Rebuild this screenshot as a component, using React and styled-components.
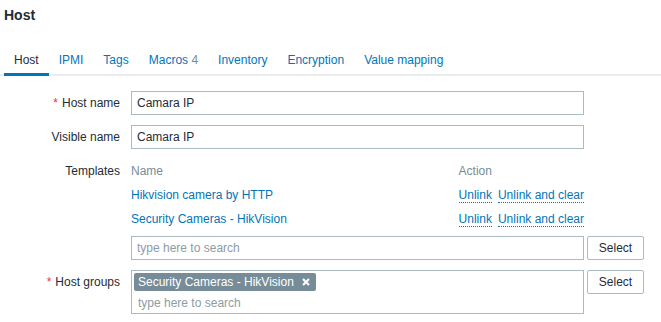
import React from 'react';
import styled, { createGlobalStyle } from 'styled-components';

const GlobalStyle = createGlobalStyle`
  body {
    margin: 0;
    background: #ffffff;
    color: #1f2c33;
    font-family: 'Liberation Sans', Arial, sans-serif;
    font-size: 12px;
  }
`;

const Page = styled.div`
  width: 661px;
`;

const Title = styled.h1`
  margin: 0;
  padding: 6px 4px 0;
  font-size: 14px;
  line-height: 18px;
  font-weight: bold;
  color: #1f2c33;
`;

const TabBar = styled.ul`
  display: flex;
  list-style: none;
  margin: 21px 0 0;
  padding: 0 0 0 4px;
  border-bottom: 2px solid #ebeef0;
`;

const Tab = styled.li`
  padding: 8px 10px 6px;
  line-height: 14px;
  margin-bottom: -2px;
  border-bottom: 3px solid ${p => (p.$active ? '#0275b8' : 'transparent')};
  color: ${p => (p.$active ? '#1f2c33' : '#0275b8')};
  white-space: nowrap;
`;

const Count = styled.span`
  color: #768d99;
`;

const Form = styled.div`
  display: grid;
  grid-template-columns: 120px 1fr;
  column-gap: 11px;
  row-gap: 10px;
  padding-top: 15px;
  align-items: start;
`;

const Label = styled.label`
  text-align: right;
  line-height: 24px;
  white-space: nowrap;
`;

const Required = styled.span`
  color: #e33734;
  margin-right: 4px;
`;

const Control = styled.div`
  display: flex;
  align-items: ${p => p.$align || 'flex-start'};
  gap: 3px;
`;

const TextBox = styled.div`
  box-sizing: border-box;
  width: 453px;
  height: 24px;
  border: 1px solid #acbbc2;
  padding: 0 5px;
  line-height: 22px;
  color: ${p => (p.$placeholder ? '#8d9ca5' : '#1f2c33')};
`;

const Field = styled.div`
  display: flex;
  flex-direction: column;
  gap: 5px;
  width: 453px;
`;

const TemplateTable = styled.div`
  display: grid;
  grid-template-columns: 1fr auto;
  line-height: 24px;
`;

const HeadCell = styled.div`
  color: #768d99;
`;

const Link = styled.span`
  color: #0275b8;
`;

const Actions = styled.div`
  display: flex;
  gap: 6px;
`;

const ActionLink = styled.span`
  color: #0275b8;
  line-height: 14px;
  border-bottom: 1px dotted #0275b8;
  align-self: center;
`;

const Button = styled.button`
  box-sizing: border-box;
  height: 24px;
  width: 57px;
  padding: 0;
  background: #ffffff;
  border: 1px solid #acbbc2;
  border-radius: 2px;
  color: #1f2c33;
  font-family: inherit;
  font-size: 12px;
`;

const MultiSelect = styled.div`
  box-sizing: border-box;
  width: 453px;
  height: 44px;
  border: 1px solid #acbbc2;
  padding: 2px 2px 0;
`;

const Chip = styled.span`
  display: inline-flex;
  align-items: center;
  gap: 8px;
  height: 18px;
  padding: 0 6px 0 4px;
  background: #768d99;
  color: #ffffff;
  border-radius: 2px;
`;

const Placeholder = styled.div`
  padding: 2px 0 0 4px;
  line-height: 20px;
  color: #8d9ca5;
`;

function CloseIcon() {
  return (
    <svg width="8" height="8" viewBox="0 0 8 8">
      <path d="M1 1 L7 7 M7 1 L1 7" stroke="#ffffff" strokeWidth="2.2" />
    </svg>
  );
}

const templates = ['Hikvision camera by HTTP', 'Security Cameras - HikVision'];
const tabs = ['Host', 'IPMI', 'Tags', 'Macros', 'Inventory', 'Encryption', 'Value mapping'];

export default function App() {
  return (
    <Page>
      <GlobalStyle />
      <Title>Host</Title>
      <TabBar>
        {tabs.map(t => (
          <Tab key={t} $active={t === 'Host'}>
            {t}
            {t === 'Macros' && <Count> 4</Count>}
          </Tab>
        ))}
      </TabBar>
      <Form>
        <Label><Required>*</Required>Host name</Label>
        <Control>
          <TextBox>Camara IP</TextBox>
        </Control>

        <Label>Visible name</Label>
        <Control>
          <TextBox>Camara IP</TextBox>
        </Control>

        <Label>Templates</Label>
        <Control $align="flex-end">
          <Field>
            <TemplateTable>
              <HeadCell>Name</HeadCell>
              <HeadCell>Action</HeadCell>
              {templates.map(t => (
                <React.Fragment key={t}>
                  <Link>{t}</Link>
                  <Actions>
                    <ActionLink>Unlink</ActionLink>
                    <ActionLink>Unlink and clear</ActionLink>
                  </Actions>
                </React.Fragment>
              ))}
            </TemplateTable>
            <TextBox $placeholder>type here to search</TextBox>
          </Field>
          <Button>Select</Button>
        </Control>

        <Label><Required>*</Required>Host groups</Label>
        <Control>
          <MultiSelect>
            <Chip>Security Cameras - HikVision<CloseIcon /></Chip>
            <Placeholder>type here to search</Placeholder>
          </MultiSelect>
          <Button>Select</Button>
        </Control>
      </Form>
    </Page>
  );
}
